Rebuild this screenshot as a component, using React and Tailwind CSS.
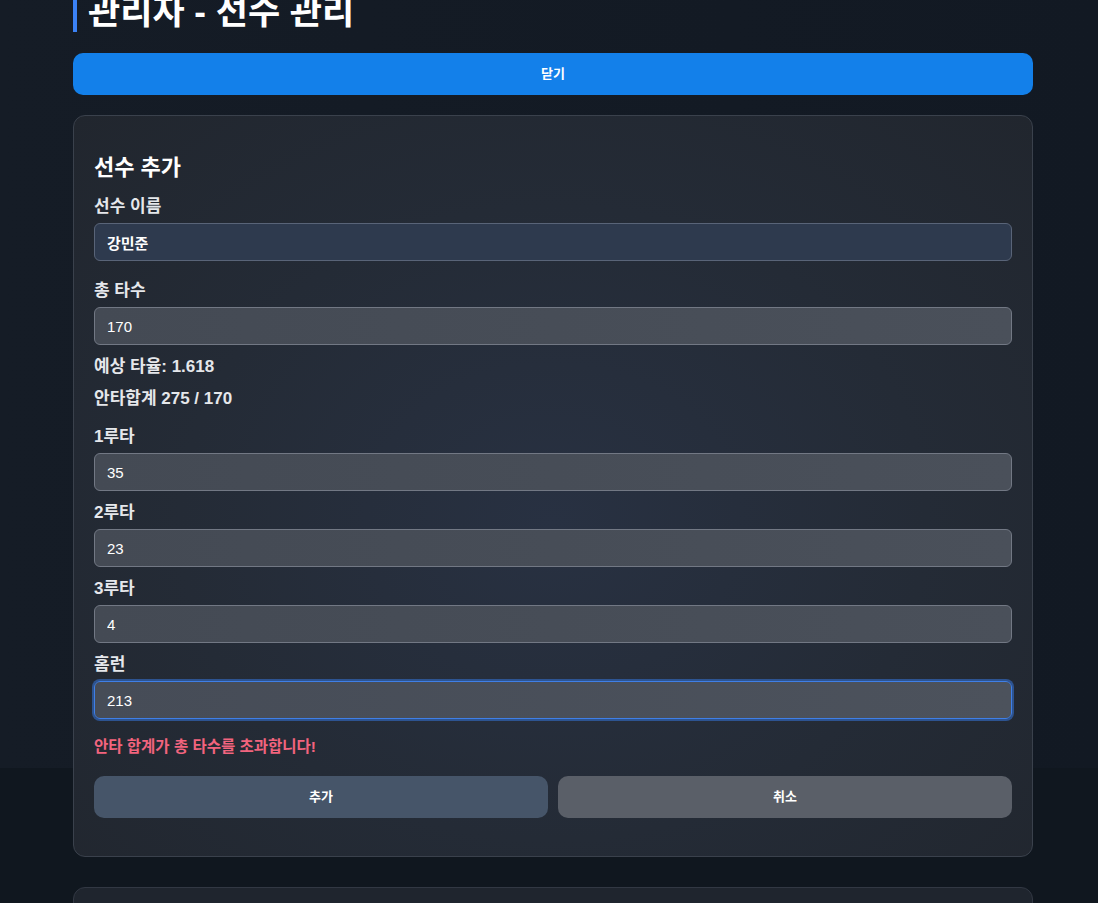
import React from "react";

const font = { fontFamily: '"Liberation Sans", "Noto Sans CJK KR", sans-serif' };

const hitFields = [
  { label: "1루타", value: "35" },
  { label: "2루타", value: "23" },
  { label: "3루타", value: "4" },
];

const App = () => {
  return (
    <div
      className="min-h-[903px] overflow-hidden bg-[#10171f] bg-[linear-gradient(90deg,#151c26,#121923)] bg-no-repeat bg-[length:100%_768px]"
      style={font}
    >
      <div className="ml-[73px] w-[960px] mt-[-8px]">
        <h1 className="border-l-4 border-[#3b82f6] pl-[11px] text-[35px] leading-[40px] font-bold text-white">
          관리자 - 선수 관리
        </h1>

        <button className="mt-[21px] w-full h-[42px] rounded-[10px] bg-[#1380ea] text-[13px] font-bold text-white">
          닫기
        </button>

        <section className="mt-5 rounded-xl border border-[#3a414c] bg-[radial-gradient(ellipse_at_50%_55%,#283142_0%,#242b36_55%,#21262e_100%)] px-5 pt-[40px] pb-[38px]">
          <h3 className="text-[22px] leading-6 font-bold text-white">선수 추가</h3>

          <div className="mt-[16px]">
            <label className="block text-[17px] leading-[22px] font-semibold text-[#e5e7eb] mb-[5px]">선수 이름</label>
            <input
              readOnly
              value="강민준"
              className="w-full h-[38px] rounded-md border border-[#596478] bg-[#2e3a4e] px-3 text-[15px] font-semibold text-white outline-none"
              style={font}
            />
          </div>

          <div className="mt-[19px]">
            <label className="block text-[17px] leading-[22px] font-semibold text-[#e5e7eb] mb-[5px]">총 타수</label>
            <input
              readOnly
              value="170"
              className="w-full h-[38px] rounded-md border border-[#727884] bg-[linear-gradient(90deg,#444a54,#4a505a)] px-3 text-[15px] text-white outline-none"
              style={font}
            />
          </div>

          <p className="mt-[11px] text-[17px] leading-[22px] font-bold text-[#e5e7eb]">예상 타율: 1.618</p>
          <p className="mt-[10px] text-[17px] leading-[22px] font-bold text-[#e5e7eb]">안타합계 275 / 170</p>

          <div className="mt-4 flex flex-col gap-[11px]">
            {hitFields.map((f) => (
              <div key={f.label}>
                <label className="block text-[17px] leading-[22px] font-semibold text-[#e5e7eb] mb-[5px]">{f.label}</label>
                <input
                  readOnly
                  value={f.value}
                  className="w-full h-[38px] rounded-md border border-[#727884] bg-[linear-gradient(90deg,#444a54,#4a505a)] px-3 text-[15px] text-white outline-none"
                  style={font}
                />
              </div>
            ))}
            <div>
              <label className="block text-[17px] leading-[22px] font-semibold text-[#e5e7eb] mb-[5px]">홈런</label>
              <input
                readOnly
                value="213"
                className="w-full h-[38px] rounded-md border border-[#3f7fe6] ring-2 ring-[#2f5ea8]/80 bg-[linear-gradient(90deg,#464c57,#4c525c)] px-3 text-[15px] text-white outline-none"
                style={font}
              />
            </div>
          </div>

          <p className="mt-[18px] text-[15.5px] leading-5 font-semibold text-[#f2647e]">안타 합계가 총 타수를 초과합니다!</p>

          <div className="mt-[19px] grid grid-cols-2 gap-[10px]">
            <button className="h-[42px] rounded-[10px] bg-[#465569] text-[13px] font-bold text-white">추가</button>
            <button className="h-[42px] rounded-[10px] bg-[#5a5f68] text-[13px] font-bold text-white">취소</button>
          </div>
        </section>

        <section className="mt-[30px] h-[200px] rounded-xl border border-[#323843] bg-[#1f252e]" />
      </div>
    </div>
  );
};

export default App;
